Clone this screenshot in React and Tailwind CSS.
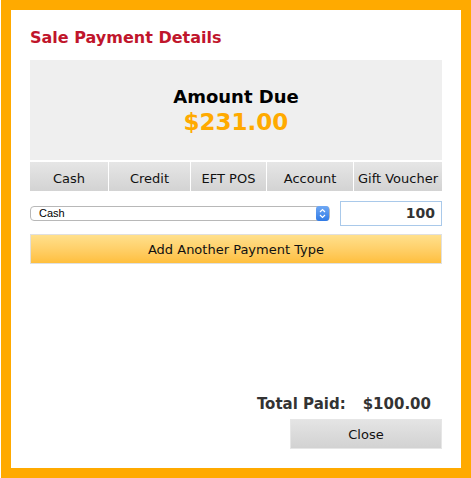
export default function App() {
  const tabs = [
    { label: 'Cash', w: 'w-[78px]' },
    { label: 'Credit', w: 'w-[81px]' },
    { label: 'EFT POS', w: 'w-[75px]' },
    { label: 'Account', w: 'w-[86px]' },
    { label: 'Gift Voucher', w: 'flex-1' },
  ];

  return (
    <div className="w-[471px] h-[478px] pl-px bg-white">
      <div className="h-full border-[10px] border-[#ffaa00] bg-white px-[19px] pt-[17px] flex flex-col font-['DejaVu_Sans',sans-serif]">
        {/* Title */}
        <h1 className="text-[16px] font-bold text-[#c0152b] leading-[22px]">Sale Payment Details</h1>

        {/* Amount due */}
        <div className="mt-[11px] h-[100px] bg-[#efefef] flex flex-col items-center justify-center pt-[1px]">
          <div className="text-[18px] font-bold text-black leading-[22px]">Amount Due</div>
          <div className="text-[23px] font-bold text-[#ffaa00] leading-[28px]">$231.00</div>
        </div>

        {/* Tabs */}
        <div className="mt-[2px] flex gap-px">
          {tabs.map((t) => (
            <button
              key={t.label}
              className={`${t.w} h-[29px] pt-[3px] bg-gradient-to-b from-[#e6e6e6] to-[#d3d3d3] text-[13px] text-[#111] leading-none`}
            >
              {t.label}
            </button>
          ))}
        </div>

        {/* Select + amount */}
        <div className="mt-[10px] flex items-center">
          <div className="w-[300px] h-[15px] rounded-[4px] border border-[#b8b8b8] bg-white flex items-center relative">
            <span className="pl-[8px] text-[11px] text-black font-['Liberation_Sans',sans-serif] leading-none">Cash</span>
            <span className="absolute right-0 top-[-1px] w-[13px] h-[15px] rounded-[3px] bg-gradient-to-b from-[#6fa8f4] to-[#2f7ae6] flex items-center justify-center">
              <svg width="7" height="11" viewBox="0 0 7 11" fill="none" stroke="white" strokeWidth="1.2">
                <path d="M1 4 L3.5 1.5 L6 4" />
                <path d="M1 7 L3.5 9.5 L6 7" />
              </svg>
            </span>
          </div>
          <div className="ml-[10px] flex-1 h-[25px] border border-[#a9c9ea] bg-white flex items-center justify-end pr-[6px] text-[14px] font-bold text-[#333]">
            100
          </div>
        </div>

        {/* Add another */}
        <button className="mt-[8px] h-[30px] w-full pt-[2px] border border-[#e0e0e0] bg-gradient-to-b from-[#ffe08c] to-[#ffbf3c] text-[13px] text-[#111]">
          Add Another Payment Type
        </button>

        <div className="flex-1" />

        {/* Total */}
        <div className="flex justify-end pr-[11px] text-[15px] font-bold text-[#333] leading-[20px]">
          <span>Total Paid:</span>
          <span className="ml-[17px]">$100.00</span>
        </div>
        <div className="mt-[5px] mb-[19px] flex justify-end">
          <button className="w-[152px] h-[30px] pt-[2px] border border-[#e6e6e6] bg-gradient-to-b from-[#e4e4e4] to-[#d2d2d2] text-[13px] text-[#111]">
            Close
          </button>
        </div>
      </div>
    </div>
  );
}
